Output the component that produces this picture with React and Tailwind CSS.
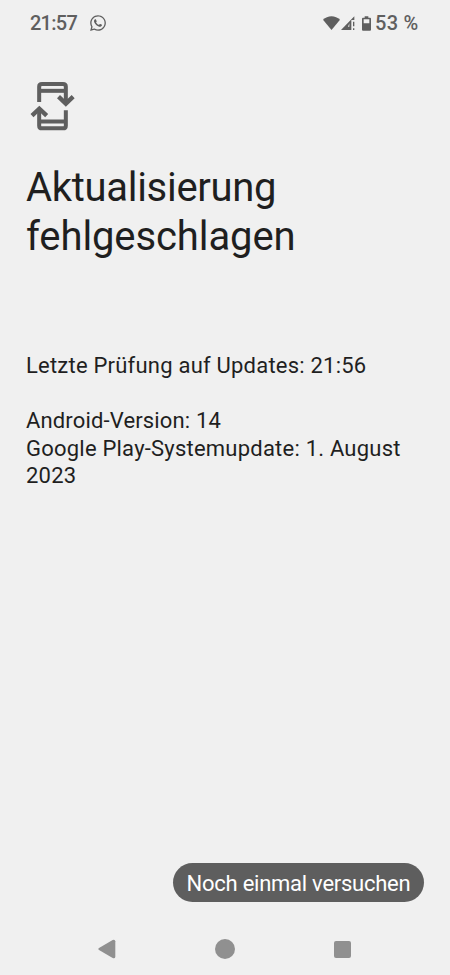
import { FaWhatsapp } from "react-icons/fa";

const WifiIcon = () => (
  <svg className="w-[17px] h-[14px]" viewBox="0 0 51 42" fill="#5f5f5f">
    <path d="M25.5 42 L0 11 C7 4 16 0.5 25.5 0.5 C35 0.5 44 4 51 11 Z" />
  </svg>
);

const SignalIcon = () => (
  <svg className="w-[14px] h-[14px]" viewBox="0 0 42 42" fill="#5f5f5f">
    <path fillRule="evenodd" d="M0 42 L40 1 V12 H31 V42 Z M21 32 H25 V22 Z" />
    <path d="M36 17 H40 V31 H36 Z M36 37 H40 V42 H36 Z" />
  </svg>
);

const BatteryIcon = () => (
  <svg className="w-[9px] h-[15px]" viewBox="0 0 27 45" fill="#5f5f5f">
    <path
      fillRule="evenodd"
      d="M8 1 H19 V5 H24 Q27 5 27 8 V41 Q27 44 24 44 H3 Q0 44 0 41 V8 Q0 5 3 5 H8 Z M5 10 V22 H22 V10 Z"
    />
  </svg>
);

const SystemUpdateIcon = () => (
  <svg className="w-[46px] h-[52px]" viewBox="30 30 138 156" fill="none" stroke="#5f5f5f" strokeWidth="12">
    <path d="M57.5 96 V50 Q57.5 42 66 42 H129 Q137.5 42 137.5 50 V100" />
    <path d="M57.5 62.5 H137.5" />
    <path d="M137.5 121 V167 Q137.5 175 129 175 H66 Q57.5 175 57.5 167 V117" />
    <path d="M57.5 154.5 H137.5" />
    <path d="M115.5 80 L137.5 101 L159.500 80" strokeWidth="13" />
    <path d="M36 137 L58 116 L80 137" strokeWidth="13" />
    <path d="M128 88 H147 L137.5 99 Z" fill="#5f5f5f" stroke="none" />
    <path d="M48.500 129 H67.500 L58 118 Z" fill="#5f5f5f" stroke="none" />
  </svg>
);

const StatusBar = () => (
  <header className="h-[46px] flex items-center justify-between pl-[30px] pr-[31px] text-[20px] font-medium text-[#5f5f5f]">
    <div className="flex items-center">
      <span className="w-[48px] tracking-[-0.75px]">21:57</span>
      <FaWhatsapp className="ml-[11px] size-[18px]" />
    </div>
    <div className="flex items-center">
      <WifiIcon />
      <span className="ml-px">
        <SignalIcon />
      </span>
      <span className="ml-[7px]">
        <BatteryIcon />
      </span>
      <span className="ml-[4px] w-[44px] whitespace-nowrap tracking-[0.3px]">53 %</span>
    </div>
  </header>
);

const NavigationBar = () => (
  <nav className="h-[52px] flex items-center justify-between pl-[98px] pr-[99px]">
    <button aria-label="Zurück">
      <svg className="w-[18px] h-[20px]" viewBox="0 0 54 60" fill="#909090">
        <path d="M3 27 L44 3 Q51 0 52 7 V53 Q51 60 44 57 L3 33 Q-1 30 3 27 Z" />
      </svg>
    </button>
    <button aria-label="Startbildschirm" className="size-[20px] rounded-full bg-[#909090]" />
    <button aria-label="Letzte Apps" className="size-[17px] rounded-[2px] bg-[#909090]" />
  </nav>
);

const App = () => {
  return (
    <div className="h-screen flex flex-col bg-[#f0f0f0] font-['Roboto',sans-serif] text-[#1f1f1f]">
      <StatusBar />

      <main className="flex-1 flex flex-col px-[26px]">
        <div className="pt-[34px] pl-1">
          <SystemUpdateIcon />
        </div>

        <h1 className="mt-[31px] text-[40px] leading-[49px] font-normal">
          <span className="block tracking-[-0.3px]">Aktualisierung</span>
          <span className="block tracking-[-0.1px]">fehlgeschlagen</span>
        </h1>

        <div className="mt-[91px] text-[22px] leading-[27.5px] tracking-[0.22px] whitespace-nowrap">
          <p>Letzte Prüfung auf Updates: 21:56</p>
          <p className="mt-[27.5px] tracking-[0.15px]">Android-Version: 14</p>
          <p>Google Play-Systemupdate: 1. August</p>
          <p>2023</p>
        </div>

        <button className="mt-auto mb-[21px] self-end w-[251px] h-[39px] pt-px rounded-full bg-[#5e5e5e] text-[22px] tracking-[-0.25px] text-white whitespace-nowrap">
          Noch einmal versuchen
        </button>
      </main>

      <NavigationBar />
    </div>
  );
};

export default App;
